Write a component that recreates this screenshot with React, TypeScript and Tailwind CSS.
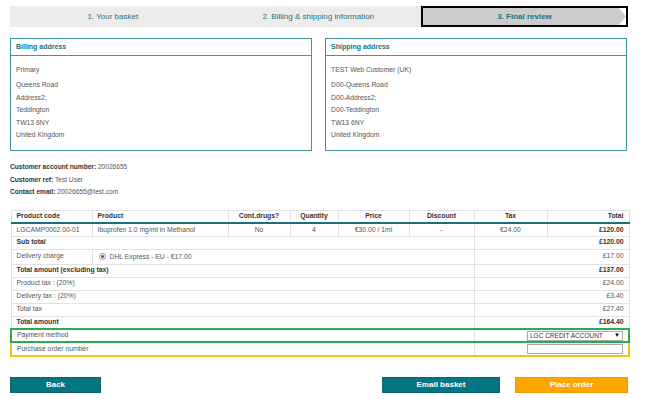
import React from 'react'

const steps = ['1. Your basket', '2. Billing & shipping information']

function AddressBox({ title, lines }: { title: string; lines: string[] }) {
  return (
    <div className="w-[302px] h-[113px] border border-[#3f959c]">
      <div className="h-[17px] border-b border-[#3f959c] pl-[5px] flex items-center text-[7px] font-bold text-[#1d7280]">
        {title}
      </div>
      <div className="pl-[5px] pt-[8px] text-[6.8px] leading-[12.4px] text-[#555]">
        <p className="mb-[3px]">{lines[0]}</p>
        {lines.slice(1).map((l) => (
          <p key={l}>{l}</p>
        ))}
      </div>
    </div>
  )
}

const cell = 'border border-[#e1e1e1] h-[13px] px-[5px] py-0 align-middle'

export default function App() {
  return (
    <div className="w-[650px] h-[399px] overflow-hidden bg-white font-['Liberation_Sans',Arial,sans-serif] text-[#555]">
      <div className="w-[618px] ml-[10px] pt-[6px]">
        {/* steps */}
        <div className="flex h-[21px] bg-[#ececec] text-[8px] text-[#1d7280]">
          {steps.map((s) => (
            <div key={s} className="flex-1 flex items-center justify-center">
              {s}
            </div>
          ))}
          <div className="relative w-[207px] border-2 border-black bg-white flex items-center justify-center">
            <svg className="absolute inset-0" width="203" height="17" viewBox="0 0 203 17" preserveAspectRatio="none">
              <polygon points="0,0 196,0 203,8.5 196,17 0,17" fill="#cccccc" />
            </svg>
            <span className="relative font-bold">3. Final review</span>
          </div>
        </div>

        {/* addresses */}
        <div className="flex justify-between mt-[11px] w-[617px]">
          <AddressBox
            title="Billing address"
            lines={['Primary', 'Queens Road', 'Address2;', 'Teddington', 'TW13 6NY', 'United Kingdom']}
          />
          <AddressBox
            title="Shipping address"
            lines={['TEST Web Customer (UK)', 'D00-Queens Road', 'D00-Address2;', 'D00-Teddington', 'TW13 6NY', 'United Kingdom']}
          />
        </div>

        {/* customer info */}
        <div className="mt-[10px] text-[6.6px] leading-[12.5px]">
          <p><span className="font-bold text-[#333]">Customer account number:</span> 20026655</p>
          <p><span className="font-bold text-[#333]">Customer ref:</span> Test User</p>
          <p><span className="font-bold text-[#333]">Contact email:</span> 20026655@test.com</p>
        </div>

        {/* basket table */}
        <table className="mt-[11px] w-[618px] border-collapse table-fixed text-[6.8px]">
          <colgroup>
            <col className="w-[81px]" />
            <col className="w-[136px]" />
            <col className="w-[62px]" />
            <col className="w-[48px]" />
            <col className="w-[71px]" />
            <col className="w-[65px]" />
            <col className="w-[73px]" />
            <col className="w-[82px]" />
          </colgroup>
          <thead>
            <tr className="border-b-2 border-b-[#1d6e7c] font-bold text-[#333]">
              <th className={`${cell} text-left`}>Product code</th>
              <th className={`${cell} text-left`}>Product</th>
              <th className={`${cell} text-center`}>Cont.drugs?</th>
              <th className={`${cell} text-center`}>Quantity</th>
              <th className={`${cell} text-center`}>Price</th>
              <th className={`${cell} text-center`}>Discount</th>
              <th className={`${cell} text-center`}>Tax</th>
              <th className={`${cell} text-right`}>Total</th>
            </tr>
          </thead>
          <tbody>
            <tr>
              <td className={cell}>LGCAMP0002.00-01</td>
              <td className={cell}>Ibuprofen 1.0 mg/ml in Methanol</td>
              <td className={`${cell} text-center`}>No</td>
              <td className={`${cell} text-center`}>4</td>
              <td className={`${cell} text-center`}>€30.00 / 1ml</td>
              <td className={`${cell} text-center`}>-</td>
              <td className={`${cell} text-center`}>€24.00</td>
              <td className={`${cell} text-right font-bold text-[#333]`}>£120.00</td>
            </tr>
            <tr className="font-bold text-[#333]">
              <td className={cell} colSpan={6}>Sub total</td>
              <td className={`${cell} text-right border-l-0`} colSpan={2}>£120.00</td>
            </tr>
            <tr>
              <td className={`${cell} h-[15px]`}>Delivery charge</td>
              <td className={cell} colSpan={5}>
                <span className="inline-flex items-center gap-[4px] pl-[1px]">
                  <span className="w-[7px] h-[7px] rounded-full border border-[#999] bg-[#f3f3f3] flex items-center justify-center">
                    <span className="w-[3px] h-[3px] rounded-full bg-[#555]" />
                  </span>
                  DHL Express - EU - €17.00
                </span>
              </td>
              <td className={`${cell} text-right`} colSpan={2}>£17.00</td>
            </tr>
            <tr className="font-bold text-[#333]">
              <td className={cell} colSpan={6}>Total amount (excluding tax)</td>
              <td className={`${cell} text-right border-l-0`} colSpan={2}>£137.00</td>
            </tr>
            <tr>
              <td className={cell} colSpan={6}>Product tax : (20%)</td>
              <td className={`${cell} text-right`} colSpan={2}>£24.00</td>
            </tr>
            <tr>
              <td className={cell} colSpan={6}>Delivery tax : (20%)</td>
              <td className={`${cell} text-right`} colSpan={2}>£3.40</td>
            </tr>
            <tr>
              <td className={cell} colSpan={6}>Total tax</td>
              <td className={`${cell} text-right`} colSpan={2}>£27.40</td>
            </tr>
            <tr className="font-bold text-[#333]">
              <td className={cell} colSpan={6}>Total amount</td>
              <td className={`${cell} text-right border-l-0`} colSpan={2}>£164.40</td>
            </tr>
            <tr className="border-2 border-[#2fa84f]">
              <td className={cell} colSpan={6}>Payment method</td>
              <td className={`${cell} text-right`} colSpan={2}>
                <span className="inline-flex items-center justify-between w-[96px] h-[10px] border border-[#a9a9a9] px-[2px] text-[6.5px] text-[#333] align-middle">
                  LGC CREDIT ACCOUNT
                  <span className="text-[6px] text-black">▼</span>
                </span>
              </td>
            </tr>
            <tr className="border-2 border-[#f4c11a]">
              <td className={`${cell} h-[14px]`} colSpan={6}>Purchase order number</td>
              <td className={`${cell} text-right`} colSpan={2}>
                <span className="inline-block w-[96px] h-[10px] border border-[#a9a9a9] align-middle" />
              </td>
            </tr>
          </tbody>
        </table>

        {/* actions */}
        <div className="flex mt-[20px] text-[8px] font-bold text-white">
          <button className="w-[91px] h-[16px] bg-[#057584] border border-[#0b6470]">Back</button>
          <button className="ml-auto w-[118px] h-[16px] bg-[#057584] border border-[#0b6470]">Email basket</button>
          <button className="ml-[15px] w-[113px] h-[16px] bg-[#ffa500] border border-[#f29a00]">Place order</button>
        </div>
      </div>
    </div>
  )
}
